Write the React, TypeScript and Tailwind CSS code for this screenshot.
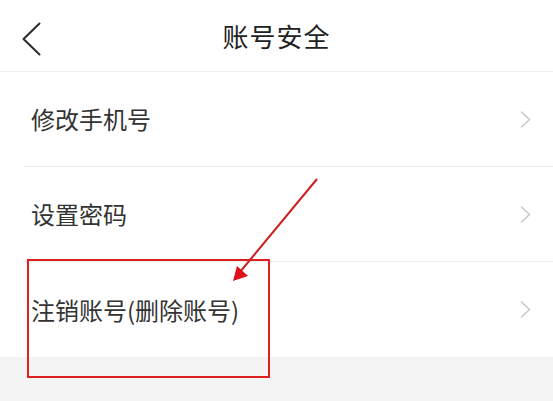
import React from 'react';

const font = { fontFamily: '"Noto Sans CJK SC", "Noto Sans", sans-serif' };

const items = ['修改手机号', '设置密码', '注销账号(删除账号)'];

function Chevron() {
  return (
    <svg width="11" height="17" viewBox="0 0 11 17" fill="none">
      <polyline points="1.5,1 9.5,8.5 1.5,16" stroke="#c9c9c9" strokeWidth="1.6" strokeLinecap="round" strokeLinejoin="round" />
    </svg>
  );
}

export default function App() {
  return (
    <div className="relative flex h-[401px] w-[553px] flex-col overflow-hidden bg-white" style={font}>
      {/* header */}
      <div className="relative flex h-[72px] shrink-0 items-center justify-center border-b border-[#efefef]">
        <button className="absolute left-[22px] top-[22px]">
          <svg width="19" height="34" viewBox="0 0 19 34" fill="none">
            <polyline points="17.5,1.5 1.5,17 17.5,32.5" stroke="#2b2b2b" strokeWidth="2" strokeLinecap="round" strokeLinejoin="round" />
          </svg>
        </button>
        <h1 className="text-[26px] leading-none tracking-[1px] text-[#222]">账号安全</h1>
      </div>

      {/* list */}
      <div className="ml-[23px] shrink-0">
        {items.map((label, i) => (
          <div
            key={label}
            className={`flex h-[95px] items-center justify-between pl-[8px] pr-[22px] ${i < items.length - 1 ? 'border-b border-[#ececec]' : ''}`}
          >
            <span className="text-[24px] leading-none text-[#333]">{label}</span>
            <Chevron />
          </div>
        ))}
      </div>

      <div className="flex-1 bg-[#f4f4f4]" />

      {/* annotation overlay */}
      <div className="pointer-events-none absolute left-[27px] top-[259px] h-[119px] w-[243px] border-2 border-[#e0201f]" />
      <svg className="pointer-events-none absolute left-0 top-0" width="553" height="401" viewBox="0 0 553 401">
        <line x1="317" y1="179" x2="240" y2="272" stroke="#cc1f1f" strokeWidth="2" />
        <polygon points="233,281 237,266 248,276" fill="#e0101a" />
      </svg>
    </div>
  );
}
